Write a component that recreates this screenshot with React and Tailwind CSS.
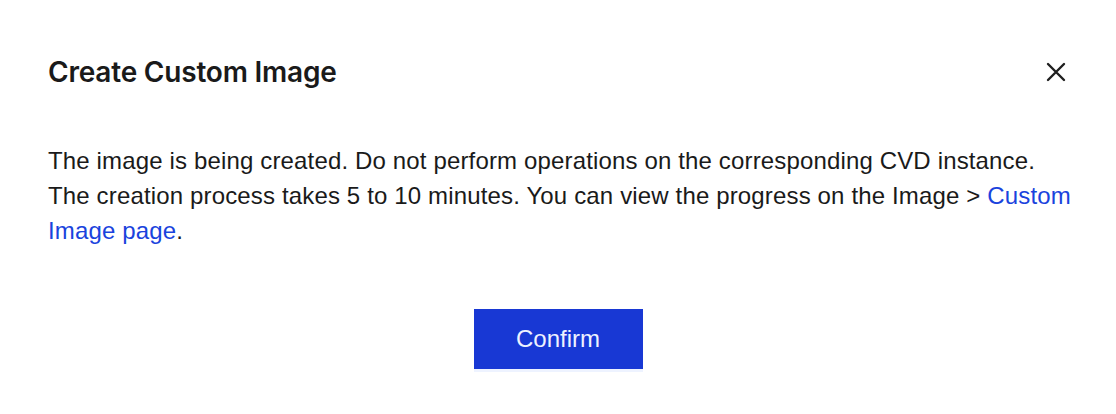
export default function App() {
  return (
    <div className="w-[1116px] h-[414px] bg-white overflow-hidden">
      <div className="px-12 pt-[55px]">
        {/* Header */}
        <div className="flex items-center justify-between h-[34px]">
          <h2 className="font-['Inter',sans-serif] font-semibold text-[28px] leading-[34px] text-[#1a1a1a] tracking-[-0.2px]">
            Create Custom Image
          </h2>
          <button className="w-7 h-7 flex items-center justify-center mr-[-2px] text-[#1f1f1f]">
            <svg width="20" height="20" viewBox="0 0 20 20" fill="none">
              <path d="M2 2L18 18M18 2L2 18" stroke="currentColor" strokeWidth="2.4" strokeLinecap="round" />
            </svg>
          </button>
        </div>

        {/* Body */}
        <div className="mt-[54px] mr-[-10px] font-['Liberation_Sans',Arial,sans-serif] text-[24px] leading-[35px] tracking-[0.15px] text-[#1a1a1a]">
          <p>The image is being created. Do not perform operations on the corresponding CVD instance.</p>
          <p>
            The creation process takes 5 to 10 minutes. You can view the progress on the Image &gt;{" "}
            <a className="text-[#1a43dd]">Custom Image page</a>.
          </p>
        </div>

        {/* Footer */}
        <div className="flex justify-center mt-[61px]">
          <button className="w-[169px] h-[60px] bg-[#1838d4] text-[#eef2ff] font-['Liberation_Sans',Arial,sans-serif] text-[24px] shadow-[0_3px_0_#eef3ff]">
            Confirm
          </button>
        </div>
      </div>
    </div>
  );
}
